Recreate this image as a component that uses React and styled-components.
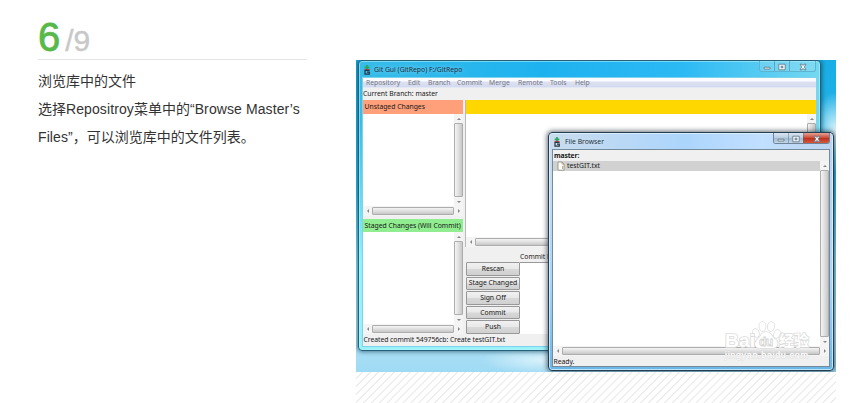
import React from "react";
import styled, { createGlobalStyle } from "styled-components";

const GlobalStyle = createGlobalStyle`
  *, *::before, *::after { box-sizing: border-box; }
  body { margin: 0; background: #fff; overflow: hidden; }
`;

const Page = styled.main`
  display: flex;
  width: 855px;
  height: 403px;
  padding-left: 38px;
  font-family: "Liberation Sans", "Noto Sans CJK SC", sans-serif;
`;
const Step = styled.section`
  width: 269px;
  flex: none;
  margin-right: 49px;
`;
const StepNumber = styled.header`
  display: flex;
  align-items: baseline;
  height: 60px;
  padding-top: 14px;
  border-bottom: 1px solid #e4e4e4;
  line-height: 46px;
`;
const Current = styled.span`
  color: #56b949;
  font-size: 40px;
  -webkit-text-stroke: 0.8px #56b949;
`;
const Total = styled.span`
  margin-left: 5px;
  color: #c8c8c8;
  font-size: 30px;
  -webkit-text-stroke: 0.4px #c8c8c8;
`;
const Description = styled.p`
  margin: 7px 0 0;
  width: 270px;
  color: #333;
  font-size: 14px;
  line-height: 28px;
  white-space: nowrap;
`;
const Latin = styled.span`
  letter-spacing: 0.1px;
`;

const Figure = styled.section`
  display: flex;
  flex-direction: column;
  width: 480px;
  padding-top: 60px;
`;
const Desktop = styled.div`
  position: relative;
  flex: none;
  height: 312px;
  overflow: hidden;
  background:
    radial-gradient(ellipse 24px 40px at 480px 72px, #e4f6fb, transparent),
    radial-gradient(ellipse 60px 14px at 185px 300px, #d8f1fb, transparent),
    linear-gradient(#18aee5 0, #1fb0e6 40px, #35c0ec 130px, #8be4f6 200px, #b2e4f5 270px, #9fdaf4 312px);
  font-family: "Noto Sans", "Open Sans", sans-serif;
  font-size: 6.8px;
  line-height: 10px;
  color: #161616;
  white-space: nowrap;
`;
const Hatch = styled.div`
  flex: 1;
  background: repeating-linear-gradient(135deg, #fff 0 3.8px, #ebebeb 4.4px 5px, #fff 5.6px);
`;

const Window = styled.div`
  position: absolute;
  display: flex;
  flex-direction: column;
  border: 1px solid #266078;
  border-radius: 4px;
`;
const GitWindow = styled(Window)`
  left: 2px;
  top: 0;
  width: 463px;
  height: 291px;
  padding: 0 3px 3px;
  background:
    linear-gradient(transparent 60px, #8ff1fb 200px, #9af1fa),
    linear-gradient(90deg, #38bce9, #1db2ef 40%, #2cb9f4 70%, #74d8f1);
  box-shadow: 0 0 4px 1px rgba(0, 45, 70, 0.55), inset 0 0 0 1px rgba(180, 245, 255, 0.55);
`;
const FileWindow = styled(Window)`
  left: 192px;
  top: 72px;
  width: 286px;
  height: 239px;
  padding: 0 3px 3px;
  border-color: #243d50;
  background:
    linear-gradient(transparent 40px, #aad5fb 150px, #69b7e7),
    linear-gradient(90deg, #c9dcee, #acd5fc 48%, #c1dfff 75%, #bcd4ef);
  box-shadow: 0 0 5px 1px rgba(20, 32, 43, 0.65), inset 0 0 0 1px rgba(230, 247, 255, 0.7);
`;
const TitleBar = styled.div`
  display: flex;
  flex: none;
  height: 16px;
  padding-left: 1px;
  padding-right: ${(p) => p.$right || "0"};
`;
const TitleText = styled.div`
  display: flex;
  flex: 1;
  gap: ${(p) => p.$gap || "3px"};
  padding-top: 3px;
`;
const Title = styled.span`
  color: ${(p) => p.$color || "#182e41"};
  line-height: 11px;
  text-shadow: 0 0 4px rgba(230, 250, 255, 0.7);
`;
const Controls = styled.div`
  display: flex;
  align-self: flex-start;
  height: 11px;
  border: 1px solid ${(p) => (p.$active ? "#6f8496" : "#5fb4d1")};
  border-top: 0;
  border-radius: 0 0 3px 3px;
  overflow: hidden;
`;
const Control = styled.span`
  display: flex;
  align-items: center;
  justify-content: center;
  width: ${(p) => p.$width};
  padding-top: 1px;
  border-left: ${(p) => (p.$first ? 0 : "1px solid rgba(70, 110, 140, .45)")};
  background: ${(p) =>
    p.$danger
      ? "linear-gradient(#e4a394, #cc4a37 48%, #b9301c 50%, #d8563b)"
      : p.$active
      ? "linear-gradient(#d9e6f2, #b8cce0 48%, #a0b8cf 50%, #c1d6e9)"
      : "rgba(160, 226, 246, .3)"};
`;
const Client = styled.div`
  display: flex;
  flex: 1;
  min-height: 0;
  flex-direction: column;
  background: #f0f0f0;
  border: 1px solid ${(p) => p.$edge};
`;
const Menu = styled.nav`
  display: flex;
  flex: none;
  height: 10px;
  padding-left: 3px;
  background: linear-gradient(#fafbff 0 30%, #dce1f2 40%, #d5dbee 85%, #eceff8);
  color: #747681;
`;
const MenuItem = styled.span`
  flex: none;
  width: ${(p) => p.$width};
  line-height: 10px;
`;
const Branch = styled.div`
  flex: none;
  height: 12px;
  line-height: 12px;
`;
const Panes = styled.div`
  display: flex;
  flex: 1;
  min-height: 0;
`;
const Changes = styled.div`
  display: flex;
  flex: none;
  flex-direction: column;
  width: 100px;
  margin-right: 2px;
`;
const PaneHeading = styled.div`
  flex: none;
  height: ${(p) => p.$height || "14px"};
  margin-top: ${(p) => p.$gap || "0"};
  padding-left: 1.5px;
  background: ${(p) => p.$color};
  line-height: 14px;
`;
const List = styled.div`
  display: flex;
  flex: none;
  height: ${(p) => p.$height};
`;
const Paper = styled.div`
  flex: 1;
  min-width: 0;
  background: #fff;
`;
const VTrack = styled.div`
  display: flex;
  flex: none;
  flex-direction: column;
  width: 9px;
  background: #f4f4f4;
`;
const HTrack = styled.div`
  display: flex;
  flex: none;
  height: 10px;
  padding: 1px 0;
  background: #f4f4f4;
`;
const Thumb = styled.span`
  flex: 1;
  border: 1px solid #adadad;
  border-radius: 1px;
  background: linear-gradient(${(p) => (p.$vertical ? "90deg" : "180deg")}, #f4f4f4, #e0e0e0 48%, #c7c7c7);
`;
const Arrow = styled.span`
  display: flex;
  align-items: center;
  justify-content: center;
  flex: none;
  width: 9px;
  height: ${(p) => (p.$vertical ? "9px" : "8px")};
`;
const Workspace = styled.div`
  display: flex;
  flex: 1;
  flex-direction: column;
`;
const DiffPane = styled.div`
  border-left: 1px solid #b9b9b9;
`;
const CommitArea = styled.div`
  display: grid;
  grid-template: 15px 72px / 54px 1fr;
  padding-left: 1px;
`;
const CommitLabel = styled.div`
  grid-column: 2;
  line-height: 19px;
`;
const Actions = styled.div`
  display: grid;
  grid-template-rows: repeat(5, 1fr);
  row-gap: 1px;
`;
const Button = styled.button`
  padding: 0;
  border: 1px solid #989898;
  border-radius: 1px;
  background: linear-gradient(#f1f1f1, #e8e8e8 48%, #d8d8d8 52%, #d0d0d0);
  color: inherit;
  font: inherit;
  line-height: 10px;
  white-space: nowrap;
`;
const CommitPaper = styled.div`
  border-top: 1px solid #999;
  background: #fff;
`;
const Status = styled.footer`
  flex: none;
  height: ${(p) => p.$height || "12px"};
  padding-left: 0.5px;
  line-height: 12px;
  letter-spacing: -0.03px;
`;
const Master = styled.div`
  flex: none;
  height: 11px;
  padding-left: 1px;
  font-weight: 700;
  line-height: 11px;
  letter-spacing: -0.12px;
`;
const FileRow = styled.div`
  display: flex;
  height: 10px;
  padding-left: 4px;
  gap: 2px;
  background: #d1d1d1;
`;
const Watermark = styled.div`
  position: absolute;
  left: 368px;
  top: 260px;
  width: 88px;
  height: 44px;
  font-family: "Liberation Sans", "Noto Sans CJK SC", sans-serif;
`;
const Glyphs = styled.svg`
  display: block;
  flex: none;
  overflow: visible;
`;

function GitIcon() {
  return (
    <Glyphs width="8" height="11" viewBox="0 0 8 11">
      <path d="M4 1v5M1.7 3.3h4.6" stroke="#24a957" strokeWidth="1.7" />
      <path d="M1.5 5.4h5" stroke="#b62c40" strokeWidth="1" />
      <path d="M6.6 6.5H2v3.6h4.3V8.2H4" fill="none" stroke="#263641" strokeWidth="1.2" />
    </Glyphs>
  );
}
const controlPaths = {
  min: "M1 4.2h6v1.8H1z",
  max: "M.8 1.2h6.4v5.6H.8zM3.1 3.2h1.8v1.6H3.1z",
  close: "M1 1.2h2l1 1.3 1-1.3h2L5.3 4 7 6.8H5L4 5.4 3 6.8H1L2.7 4z",
};
function WindowControls({ active }) {
  return (
    <Controls $active={active}>
      {["min", "max", "close"].map((kind) => (
        <Control
          key={kind}
          $first={kind === "min"}
          $active={active}
          $danger={active && kind === "close"}
          $width={kind === "close" ? "26px" : kind === "min" ? "14px" : "15px"}
        >
          <Glyphs width="8" height="8" viewBox="0 0 8 8">
            <path d={controlPaths[kind]} fill="#f4f8fa" stroke="#5d7482" strokeWidth=".8" fillRule="evenodd" />
          </Glyphs>
        </Control>
      ))}
    </Controls>
  );
}
const arrows = { up: "M1 4 3 2l2 2z", down: "M1 2l2 2 2-2z", left: "M4 1 2 3l2 2z", right: "M2 1l2 2-2 2z" };
function ScrollArrow({ direction }) {
  return (
    <Arrow $vertical={direction === "up" || direction === "down"}>
      <Glyphs width="6" height="6" viewBox="0 0 6 6"><path d={arrows[direction]} fill="#858585" /></Glyphs>
    </Arrow>
  );
}
function VScroll() {
  return <VTrack><ScrollArrow direction="up" /><Thumb $vertical /><ScrollArrow direction="down" /></VTrack>;
}
function HScroll() {
  return <HTrack><ScrollArrow direction="left" /><Thumb /><ScrollArrow direction="right" /></HTrack>;
}
function DocIcon() {
  return (
    <Glyphs width="8" height="10" viewBox="0 0 8 10">
      <path d="M1 1h4l2 2v6.2H1z" fill="#fffef3" stroke="#8b8980" strokeWidth=".8" />
      <path d="M5 1v2h2M5.5 5v3" fill="none" stroke="#a79d85" strokeWidth=".8" />
    </Glyphs>
  );
}
function BaiduMark() {
  return (
    <Watermark>
      <Glyphs width="88" height="44" viewBox="0 0 88 44">
        <g fill="#fff" stroke="#dcdcdc" strokeWidth="1.6" paintOrder="stroke">
          <ellipse cx="32" cy="13" rx="2.8" ry="4" transform="rotate(-20 32 13)" />
          <ellipse cx="38.5" cy="6.5" rx="3.1" ry="4.4" />
          <ellipse cx="47" cy="6.5" rx="3.1" ry="4.4" transform="rotate(10 47 6.5)" />
          <ellipse cx="53" cy="14" rx="2.8" ry="4" transform="rotate(22 53 14)" />
          <path d="M42 12c5 0 6 5 9 7 4 3 3 8-1 9H35c-5-1-5-6-1-9 3-2 3-7 8-7z" />
          <text x="1" y="27" fontSize="18" fontWeight="700" textLength="30" lengthAdjust="spacingAndGlyphs">Bai</text>
          <text x="55" y="26" fontSize="15" fontWeight="700" textLength="30" lengthAdjust="spacingAndGlyphs">经验</text>
          <text x="1" y="38" fontSize="9" textLength="83" strokeWidth="1">jingyan.baidu.com</text>
        </g>
        <text x="35" y="26" fill="#fff" stroke="#d4d4d4" strokeWidth=".8" fontSize="12" fontWeight="700" textLength="14">du</text>
      </Glyphs>
    </Watermark>
  );
}

const menuItems = [["Repository", "42px"], ["Edit", "20px"], ["Branch", "29px"], ["Commit", "32px"], ["Merge", "29px"], ["Remote", "32px"], ["Tools", "25px"], ["Help", "20px"]];
const commitActions = ["Rescan", "Stage Changed", "Sign Off", "Commit", "Push"];

export default function App() {
  return (
    <>
      <GlobalStyle />
      <Page>
        <Step>
          <StepNumber><Current>6</Current><Total>/9</Total></StepNumber>
          <Description>
            浏览库中的文件<br />
            选择<Latin>Repositroy</Latin>菜单中的<Latin>“Browse Master’s</Latin><br />
            <Latin>Files”</Latin>，可以浏览库中的文件列表。
          </Description>
        </Step>
        <Figure>
          <Desktop>
            <GitWindow>
              <TitleBar $right="1px">
                <TitleText><GitIcon /><Title>Git Gui (GitRepo) F:/GitRepo</Title></TitleText>
                <WindowControls />
              </TitleBar>
              <Client $edge="#7ed2e9">
                <Menu>{menuItems.map(([label, width]) => <MenuItem key={label} $width={width}>{label}</MenuItem>)}</Menu>
                <Branch>Current Branch: master</Branch>
                <Panes>
                  <Changes>
                    <PaneHeading $color="#ffa07a">Unstaged Changes</PaneHeading>
                    <List $height="92px"><Paper /><VScroll /></List>
                    <HScroll />
                    <PaneHeading $color="#90ee90" $height="13px" $gap="3px">Staged Changes (Will Commit)</PaneHeading>
                    <List $height="92px"><Paper /><VScroll /></List>
                    <HScroll />
                  </Changes>
                  <Workspace>
                    <DiffPane>
                      <PaneHeading $color="#ffd700" />
                      <List $height="123px"><Paper /><VScroll /></List>
                      <HScroll />
                    </DiffPane>
                    <CommitArea>
                      <CommitLabel>Commit Message:</CommitLabel>
                      <Actions>{commitActions.map((label) => <Button key={label}>{label}</Button>)}</Actions>
                      <CommitPaper />
                    </CommitArea>
                  </Workspace>
                </Panes>
                <Status>Created commit 549756cb: Create testGIT.txt</Status>
              </Client>
            </GitWindow>
            <FileWindow>
              <TitleBar>
                <TitleText $gap="4px"><GitIcon /><Title $color="#243240">File Browser</Title></TitleText>
                <WindowControls active />
              </TitleBar>
              <Client $edge="#758b9c">
                <Master>master:</Master>
                <Panes>
                  <Paper><FileRow><DocIcon />testGIT.txt</FileRow></Paper>
                  <VScroll />
                </Panes>
                <HScroll />
                <Status $height="10px">Ready.</Status>
              </Client>
            </FileWindow>
            <BaiduMark />
          </Desktop>
          <Hatch />
        </Figure>
      </Page>
    </>
  );
}
